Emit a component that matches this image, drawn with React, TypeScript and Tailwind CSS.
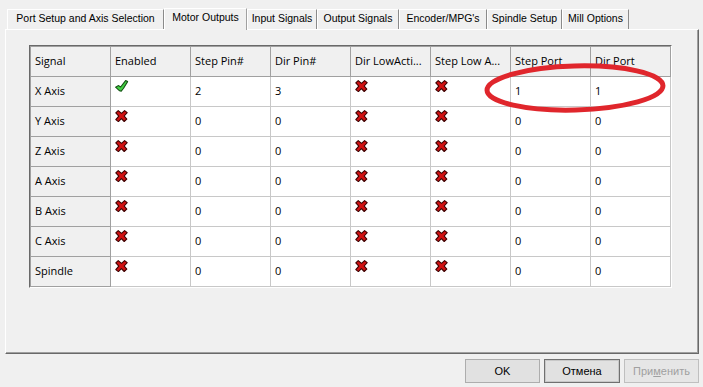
import React from 'react';

const TABS = [
  { label: 'Port Setup and Axis Selection', w: 'w-[157px]' },
  { label: 'Motor Outputs', w: 'w-[83px]', active: true },
  { label: 'Input Signals', w: 'w-[70px]' },
  { label: 'Output Signals', w: 'w-[82px]' },
  { label: "Encoder/MPG's", w: 'w-[88px]' },
  { label: 'Spindle Setup', w: 'w-[75px]' },
  { label: 'Mill Options', w: 'w-[67px]' },
];

const HEADERS = ['Signal', 'Enabled', 'Step Pin#', 'Dir Pin#', 'Dir LowActi...', 'Step Low A...', 'Step Port', 'Dir Port'];

type Row = { name: string; enabled: boolean; step: string; dir: string; stepPort: string; dirPort: string };

const ROWS: Row[] = [
  { name: 'X Axis', enabled: true, step: '2', dir: '3', stepPort: '1', dirPort: '1' },
  { name: 'Y Axis', enabled: false, step: '0', dir: '0', stepPort: '0', dirPort: '0' },
  { name: 'Z Axis', enabled: false, step: '0', dir: '0', stepPort: '0', dirPort: '0' },
  { name: 'A Axis', enabled: false, step: '0', dir: '0', stepPort: '0', dirPort: '0' },
  { name: 'B Axis', enabled: false, step: '0', dir: '0', stepPort: '0', dirPort: '0' },
  { name: 'C Axis', enabled: false, step: '0', dir: '0', stepPort: '0', dirPort: '0' },
  { name: 'Spindle', enabled: false, step: '0', dir: '0', stepPort: '0', dirPort: '0' },
];

const RedX = () => (
  <svg width="13" height="12" viewBox="0 0 13 12" className="block">
    <polygon
      points="0.8,2.8 3.2,0.6 6.5,3.4 9.6,0.6 12.2,2.6 9.2,6 11.8,9.2 9.2,11.5 6.4,8.6 3.4,11.6 0.8,9.6 3.8,6.1"
      fill="#d01212"
      stroke="#3e0000"
      strokeWidth="1.1"
      strokeLinejoin="round"
    />
  </svg>
);

const GreenCheck = () => (
  <svg width="14" height="12" viewBox="0 0 14 12" className="block">
    <polygon
      points="0.6,7.2 3.6,5.6 5.6,7 10.6,0.6 12.6,1.6 8.4,8.5 6.2,11.2 4.6,10.8"
      fill="#42d042"
      stroke="#145214"
      strokeWidth="1.1"
      strokeLinejoin="round"
    />
  </svg>
);

const IconCell = ({ on }: { on: boolean }) => (
  <td className="h-[30px] align-top bg-white border border-[#c8c8c8] pl-[4px] pt-[3px]">
    {on ? <GreenCheck /> : <RedX />}
  </td>
);

const TextCell = ({ v }: { v: string }) => (
  <td className="h-[30px] align-middle bg-white border border-[#c8c8c8] px-[4px]">{v}</td>
);

export default function App() {
  return (
    <div className="relative w-[703px] h-[387px] overflow-hidden bg-[#f0f0f0] text-black" style={{ fontFamily: '"Liberation Sans", Arial, sans-serif' }}>
      {/* tab strip */}
      <div className="flex items-end h-[29px] pl-[7px]">
        {TABS.map(t =>
          t.active ? (
            <div
              key={t.label}
              className={`${t.w} h-[22px] translate-y-[1px] relative z-10 bg-[#f0f0f0] border-t border-l border-white border-r border-r-[#a0a0a0] flex items-center justify-center pb-[3px] text-[10.5px]`}
            >
              {t.label}
            </div>
          ) : (
            <div
              key={t.label}
              className={`${t.w} h-[20px] bg-[#f0f0f0] border-t border-l border-white border-r border-r-[#8a8a8a] flex items-center justify-center pb-[1px] text-[10.5px] whitespace-nowrap`}
            >
              {t.label}
            </div>
          )
        )}
      </div>

      {/* tab panel */}
      <div className="ml-[5px] w-[694px] h-[325px] border-t border-l border-white border-r border-b border-r-[#696969] border-b-[#696969] shadow-[inset_-1px_-1px_0_#a0a0a0] pl-[23px] pt-[15px]">
        <div className="inline-block border-t border-l border-[#696969] border-r border-b border-r-white border-b-white">
          <table className="table-fixed w-[641px] border-collapse text-[11px]" style={{ fontFamily: '"Open Sans", "Noto Sans", sans-serif' }}>
            <colgroup>
              {HEADERS.map(h => (
                <col key={h} className="w-[80px]" />
              ))}
            </colgroup>
            <thead>
              <tr>
                {HEADERS.map(h => (
                  <th
                    key={h}
                    className="h-[30px] bg-[#f0f0f0] border border-[#a0a0a0] px-[4px] text-left font-normal align-middle whitespace-nowrap overflow-hidden"
                  >
                    {h}
                  </th>
                ))}
              </tr>
            </thead>
            <tbody>
              {ROWS.map(r => (
                <tr key={r.name}>
                  <td className="h-[30px] bg-[#f0f0f0] border border-[#a0a0a0] px-[4px] align-middle">{r.name}</td>
                  <IconCell on={r.enabled} />
                  <TextCell v={r.step} />
                  <TextCell v={r.dir} />
                  <IconCell on={false} />
                  <IconCell on={false} />
                  <TextCell v={r.stepPort} />
                  <TextCell v={r.dirPort} />
                </tr>
              ))}
            </tbody>
          </table>
        </div>
      </div>

      {/* dialog buttons */}
      <div className="flex justify-end gap-[4px] pr-[4px] mt-[5px] text-[11px]">
        <button className="w-[75px] h-[24px] bg-[#e1e1e1] border border-[#adadad]">OK</button>
        <button className="w-[76px] h-[24px] bg-[#e1e1e1] border border-[#707070] shadow-[inset_0_0_0_1px_#c8c8c8]">Отмена</button>
        <button className="w-[75px] h-[24px] bg-[#e6e6e6] border border-[#bfbfbf] text-[#a0a0a0]">
          При<span className="underline">м</span>енить
        </button>
      </div>

      {/* red annotation ellipse */}
      <svg className="absolute left-0 top-0 pointer-events-none" width="703" height="387">
        <ellipse cx="575" cy="88" rx="88" ry="22" fill="none" stroke="#e0262c" strokeWidth="5" transform="rotate(-1.5 575 88)" />
      </svg>
    </div>
  );
}
